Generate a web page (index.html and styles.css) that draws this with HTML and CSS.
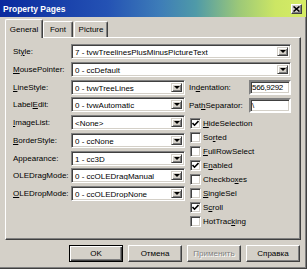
FILE: index.html
```html
<!DOCTYPE html>
<html lang="ru">
<head>
    <meta charset="UTF-8">
    <title>Property Pages</title>
    <link rel="stylesheet" href="styles.css">
</head>
<body>
    <div class="window">
        <div class="titlebar">
            <span class="title">Property Pages</span>
            <span class="close">
                <svg width="7" height="6" viewBox="0 0 7 6"><path d="M0.5 0.5 L6.5 5.5 M6.5 0.5 L0.5 5.5" stroke="#000" stroke-width="1.6" fill="none"/></svg>
            </span>
        </div>

        <div class="tabs">
            <div class="tab active tab-general">General</div>
            <div class="tab tab-font">Font</div>
            <div class="tab tab-picture">Picture</div>
        </div>

        <div class="panel">
            <div class="row">
                <span class="lbl">St<u>y</u>le:</span>
                <div class="combo wide"><span class="val">7 - tvwTreelinesPlusMinusPictureText</span><span class="drop"></span></div>
            </div>
            <div class="row">
                <span class="lbl"><u>M</u>ousePointer:</span>
                <div class="combo wide"><span class="val">0 - ccDefault</span><span class="drop"></span></div>
            </div>

            <div class="cols">
                <div class="left">
                    <div class="row">
                        <span class="lbl"><u>L</u>ineStyle:</span>
                        <div class="combo"><span class="val">0 - tvwTreeLines</span><span class="drop"></span></div>
                    </div>
                    <div class="row">
                        <span class="lbl">Label<u>E</u>dit:</span>
                        <div class="combo"><span class="val">0 - tvwAutomatic</span><span class="drop"></span></div>
                    </div>
                    <div class="row">
                        <span class="lbl"><u>I</u>mageList:</span>
                        <div class="combo"><span class="val">&lt;None&gt;</span><span class="drop"></span></div>
                    </div>
                    <div class="row">
                        <span class="lbl"><u>B</u>orderStyle:</span>
                        <div class="combo"><span class="val">0 - ccNone</span><span class="drop"></span></div>
                    </div>
                    <div class="row">
                        <span class="lbl">Appearance:</span>
                        <div class="combo"><span class="val">1 - cc3D</span><span class="drop"></span></div>
                    </div>
                    <div class="row">
                        <span class="lbl">OLEDragMode:</span>
                        <div class="combo"><span class="val">0 - ccOLEDragManual</span><span class="drop"></span></div>
                    </div>
                    <div class="row">
                        <span class="lbl"><u>O</u>LEDropMode:</span>
                        <div class="combo"><span class="val">0 - ccOLEDropNone</span><span class="drop"></span></div>
                    </div>
                </div>

                <div class="right">
                    <div class="field">
                        <span>In<u>d</u>entation:</span>
                        <div class="edit">566,9292</div>
                    </div>
                    <div class="field">
                        <span>Pat<u>h</u>Separator:</span>
                        <div class="edit">\</div>
                    </div>

                    <div class="checks">
                        <div class="check"><span class="box"><svg width="7" height="7" viewBox="0 0 7 7"><path d="M0.5 3 L2.5 5.2 L6.5 1" stroke="#000" stroke-width="1.6" fill="none"/></svg></span><span><u>H</u>ideSelection</span></div>
                        <div class="check"><span class="box"></span><span>So<u>r</u>ted</span></div>
                        <div class="check"><span class="box"></span><span><u>F</u>ullRowSelect</span></div>
                        <div class="check"><span class="box"><svg width="7" height="7" viewBox="0 0 7 7"><path d="M0.5 3 L2.5 5.2 L6.5 1" stroke="#000" stroke-width="1.6" fill="none"/></svg></span><span>E<u>n</u>abled</span></div>
                        <div class="check"><span class="box"></span><span>Checkbo<u>x</u>es</span></div>
                        <div class="check"><span class="box"></span><span><u>S</u>ingleSel</span></div>
                        <div class="check"><span class="box"><svg width="7" height="7" viewBox="0 0 7 7"><path d="M0.5 3 L2.5 5.2 L6.5 1" stroke="#000" stroke-width="1.6" fill="none"/></svg></span><span>S<u>c</u>roll</span></div>
                        <div class="check"><span class="box"></span><span>HotTrac<u>k</u>ing</span></div>
                    </div>
                </div>
            </div>
        </div>

        <div class="buttons">
            <div class="btn default">OK</div>
            <div class="btn">Отмена</div>
            <div class="btn disabled">Применить</div>
            <div class="btn">Справка</div>
        </div>
    </div>
</body>
</html>
```

FILE: styles.css
```css
* {
    box-sizing: border-box;
}
body {
    margin: 0;
    background: #d4d0c8;
    font-family: 'Liberation Sans', Arial, sans-serif;
    font-size: 8px;
    color: #000000;
}
.window {
    width: 307px;
    height: 269px;
    background: #d4d0c8;
    border-right: 1px solid #404040;
    border-bottom: 1px solid #404040;
    box-shadow: inset -1px -1px #808080;
    display: flex;
    flex-direction: column;
}
.titlebar {
    height: 17px;
    padding: 0 4px 0 3px;
    display: flex;
    align-items: center;
    justify-content: space-between;
    background: linear-gradient(to right, #0a2a9e 0%, #2452b4 35%, #3d7cb8 52%, #4f9aa8 64%, #9cc878 78%, #cce664 90%, #d6ec66 100%);
}
.title {
    color: #ffffff;
    font-weight: bold;
    font-size: 8.5px;
}
.close {
    width: 11px;
    height: 10px;
    background: #d4d0c8;
    border: 1px solid;
    border-color: #ffffff #404040 #404040 #ffffff;
    box-shadow: inset -1px -1px #808080;
    display: flex;
    align-items: center;
    justify-content: center;
}

/* tabs */
.tabs {
    display: flex;
    align-items: flex-end;
    height: 19px;
    margin: 2px 0 0 6px;
    position: relative;
    z-index: 1;
}
.tab {
    height: 16px;
    margin-bottom: 1px;
    border-top: 1px solid #ffffff;
    border-left: 1px solid #ffffff;
    border-right: 1px solid #404040;
    box-shadow: inset -1px 0 #808080;
    border-radius: 2px 2px 0 0;
    display: flex;
    align-items: center;
    justify-content: center;
    background: #d4d0c8;
}
.tab.active {
    height: 19px;
    margin-bottom: 0;
    margin-left: -1px;
}
.tab-general { width: 38px; }
.tab-font { width: 30px; }
.tab-picture { width: 34px; margin-left: 1px; }

/* panel */
.panel {
    width: 296px;
    height: 203px;
    margin-left: 5px;
    margin-top: -1px;
    padding: 6px 9px 0 7px;
    border-top: 1px solid #ffffff;
    border-left: 1px solid #ffffff;
    border-right: 1px solid #404040;
    border-bottom: 1px solid #404040;
    box-shadow: inset -1px -1px #808080;
}
.row {
    display: flex;
    align-items: center;
    height: 15px;
    margin-bottom: 2.75px;
}
.lbl {
    width: 58px;
    flex: none;
}
.combo {
    width: 114px;
    height: 15px;
    padding: 2px;
    display: flex;
    background: #ffffff;
    border: 1px solid;
    border-color: #808080 #ffffff #ffffff #808080;
    box-shadow: inset 1px 1px #404040, inset -1px -1px #d4d0c8;
}
.combo.wide {
    flex: 1;
}
.val {
    flex: 1;
    padding-left: 1px;
    line-height: 11px;
    white-space: nowrap;
    overflow: hidden;
}
.drop {
    width: 11px;
    background: #d4d0c8;
    border: 1px solid;
    border-color: #d4d0c8 #404040 #404040 #d4d0c8;
    box-shadow: inset 1px 1px #ffffff, inset -1px -1px #808080;
    display: flex;
    align-items: center;
    justify-content: center;
}
.drop::after {
    content: '';
    border-left: 3px solid transparent;
    border-right: 3px solid transparent;
    border-top: 3px solid #000000;
}

.cols {
    display: flex;
    gap: 4px;
}
.left {
    width: 172px;
}
.right {
    flex: 1;
}
.field {
    display: flex;
    align-items: center;
    justify-content: space-between;
    height: 15px;
    margin-bottom: 3px;
}
.edit {
    width: 42px;
    height: 15px;
    padding: 0 1px;
    line-height: 11px;
    letter-spacing: -0.3px;
    white-space: nowrap;
    overflow: hidden;
    background: #ffffff;
    border: 2px solid;
    border-color: #808080 #ffffff #ffffff #808080;
    box-shadow: inset 1px 1px #404040, inset -1px -1px #d4d0c8;
}
.checks {
    margin-top: 4px;
}
.check {
    display: flex;
    align-items: center;
    gap: 2px;
    height: 14px;
    padding-left: 1px;
}
.box {
    width: 11px;
    height: 11px;
    background: #ffffff;
    border: 1px solid;
    border-color: #808080 #ffffff #ffffff #808080;
    box-shadow: inset 1px 1px #404040, inset -1px -1px #d4d0c8;
    display: flex;
    align-items: center;
    justify-content: center;
}

/* bottom buttons */
.buttons {
    display: flex;
    justify-content: flex-end;
    gap: 5px;
    margin-top: 5px;
    padding-right: 6px;
}
.btn {
    width: 54px;
    height: 17px;
    display: flex;
    align-items: center;
    justify-content: center;
    border: 1px solid;
    border-color: #ffffff #404040 #404040 #ffffff;
    box-shadow: inset -1px -1px #808080;
}
.btn.default {
    border-color: #000000;
    box-shadow: inset 1px 1px #ffffff, inset -1px -1px #404040, inset -2px -2px #808080;
}
.btn.disabled {
    color: #808080;
    text-shadow: 1px 1px #ffffff;
}
```
